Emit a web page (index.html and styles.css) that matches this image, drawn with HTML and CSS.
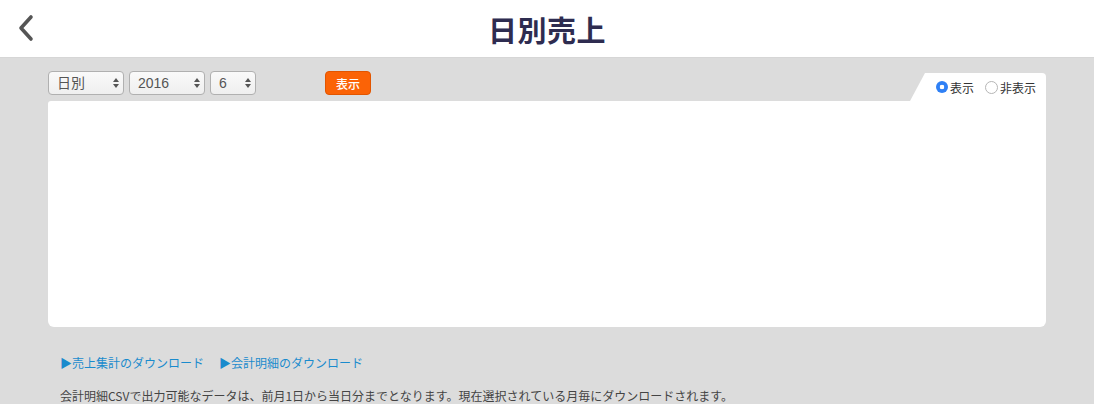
FILE: index.html
```html
<!DOCTYPE html>
<html lang="ja">
<head>
    <meta charset="UTF-8">
    <title>日別売上</title>
    <link rel="stylesheet" href="styles.css">
</head>
<body>
    <header class="header">
        <a class="back" href="#">
            <svg width="20" height="28" viewBox="0 0 20 28">
                <path d="M15 3 L5 14 L15 25" fill="none" stroke="#555" stroke-width="3.6" stroke-linecap="round" stroke-linejoin="round"/>
            </svg>
        </a>
        <h1 class="title">日別売上</h1>
    </header>

    <main class="main">
        <div class="toolbar">
            <div class="select-wrap w-wide">
                <select class="select"><option>日別</option></select>
                <svg class="arrows" width="8" height="12" viewBox="0 0 8 12"><path d="M4 1 L7 5 L1 5 Z M4 11 L7 7 L1 7 Z" fill="#555"/></svg>
            </div>
            <div class="select-wrap w-wide">
                <select class="select"><option>2016</option></select>
                <svg class="arrows" width="8" height="12" viewBox="0 0 8 12"><path d="M4 1 L7 5 L1 5 Z M4 11 L7 7 L1 7 Z" fill="#555"/></svg>
            </div>
            <div class="select-wrap w-narrow">
                <select class="select"><option>6</option></select>
                <svg class="arrows" width="8" height="12" viewBox="0 0 8 12"><path d="M4 1 L7 5 L1 5 Z M4 11 L7 7 L1 7 Z" fill="#555"/></svg>
            </div>
            <button class="btn-show">表示</button>

            <div class="tab">
                <label class="radio"><span class="dot checked"></span>表示</label>
                <label class="radio"><span class="dot"></span>非表示</label>
            </div>
        </div>

        <div class="panel"></div>

        <div class="links">
            <a href="#">▶売上集計のダウンロード</a>
            <a href="#">▶会計明細のダウンロード</a>
        </div>

        <p class="note">会計明細CSVで出力可能なデータは、前月1日から当日分までとなります。現在選択されている月毎にダウンロードされます。</p>
    </main>
</body>
</html>
```

FILE: styles.css
```css
body {
    margin: 0;
    padding: 0;
    background-color: #dcdcdc;
    color: #444;
    font-family: "Helvetica Neue", "Liberation Sans", "Noto Sans CJK JP", sans-serif;
    overflow: hidden;
}

.header {
    height: 58px;
    background-color: #ffffff;
    display: flex;
    align-items: center;
    justify-content: center;
    position: relative;
    border-bottom: 1px solid #d6d6d6;
    box-sizing: border-box;
}

.back {
    position: absolute;
    left: 16px;
    top: 14px;
    display: block;
}

.title {
    margin: 0;
    font-size: 29px;
    font-weight: bold;
    color: #2e2c50;
    font-family: "Noto Sans CJK JP", sans-serif;
    letter-spacing: 0.5px;
}

.main {
    padding: 0 48px;
}

.toolbar {
    display: flex;
    align-items: flex-start;
    height: 30px;
    margin-top: 13px;
}

.select-wrap {
    position: relative;
    height: 24px;
    margin-right: 5px;
}

.w-wide { width: 76px; }
.w-narrow { width: 46px; }

.select {
    -webkit-appearance: none;
    appearance: none;
    width: 100%;
    height: 24px;
    padding: 0 0 0 8px;
    border: 1px solid #b0b0b0;
    border-radius: 4px;
    background: linear-gradient(#fafafa, #efefef);
    font-family: "Liberation Sans", "Noto Sans CJK JP", sans-serif;
    font-size: 14px;
    color: #555;
    box-sizing: border-box;
}

.arrows {
    position: absolute;
    right: 4px;
    top: 6px;
    pointer-events: none;
}

.btn-show {
    margin-left: 64px;
    width: 46px;
    height: 24px;
    border: 1px solid #e25500;
    border-radius: 4px;
    background-color: #fb6306;
    color: #ffffff;
    font-family: "Noto Sans CJK JP", sans-serif;
    font-size: 12px;
    font-weight: 500;
    padding: 0;
}

.tab {
    margin-left: auto;
    align-self: flex-end;
    width: 136px;
    height: 28px;
    background-color: #ffffff;
    border-top-right-radius: 4px;
    clip-path: polygon(15px 0, 100% 0, 100% 100%, 0 100%);
    display: flex;
    align-items: center;
    justify-content: flex-end;
    gap: 11px;
    padding-right: 10px;
    box-sizing: border-box;
    font-family: "Noto Sans CJK JP", sans-serif;
    font-size: 12px;
    color: #333;
}

.radio {
    display: flex;
    align-items: center;
    gap: 2px;
}

.dot {
    width: 11px;
    height: 11px;
    border-radius: 50%;
    border: 1px solid #b5b5b5;
    background-color: #fff;
}

.dot.checked {
    border: none;
    width: 12px;
    height: 12px;
    background: radial-gradient(circle, #fff 0 2px, #2f80f5 2.6px);
}

.panel {
    height: 226px;
    background-color: #ffffff;
    border-radius: 3px 0 6px 6px;
}

.links {
    margin-top: 27px;
    padding-left: 12px;
    display: flex;
    gap: 15px;
    font-family: "Noto Sans CJK JP", sans-serif;
    font-size: 12px;
    line-height: 18px;
}

.links a {
    color: #1a8bcd;
    text-decoration: none;
}

.note {
    margin: 15px 0 0;
    padding-left: 12px;
    font-family: "Noto Sans CJK JP", sans-serif;
    font-size: 12px;
    line-height: 18px;
    color: #444;
}
```
